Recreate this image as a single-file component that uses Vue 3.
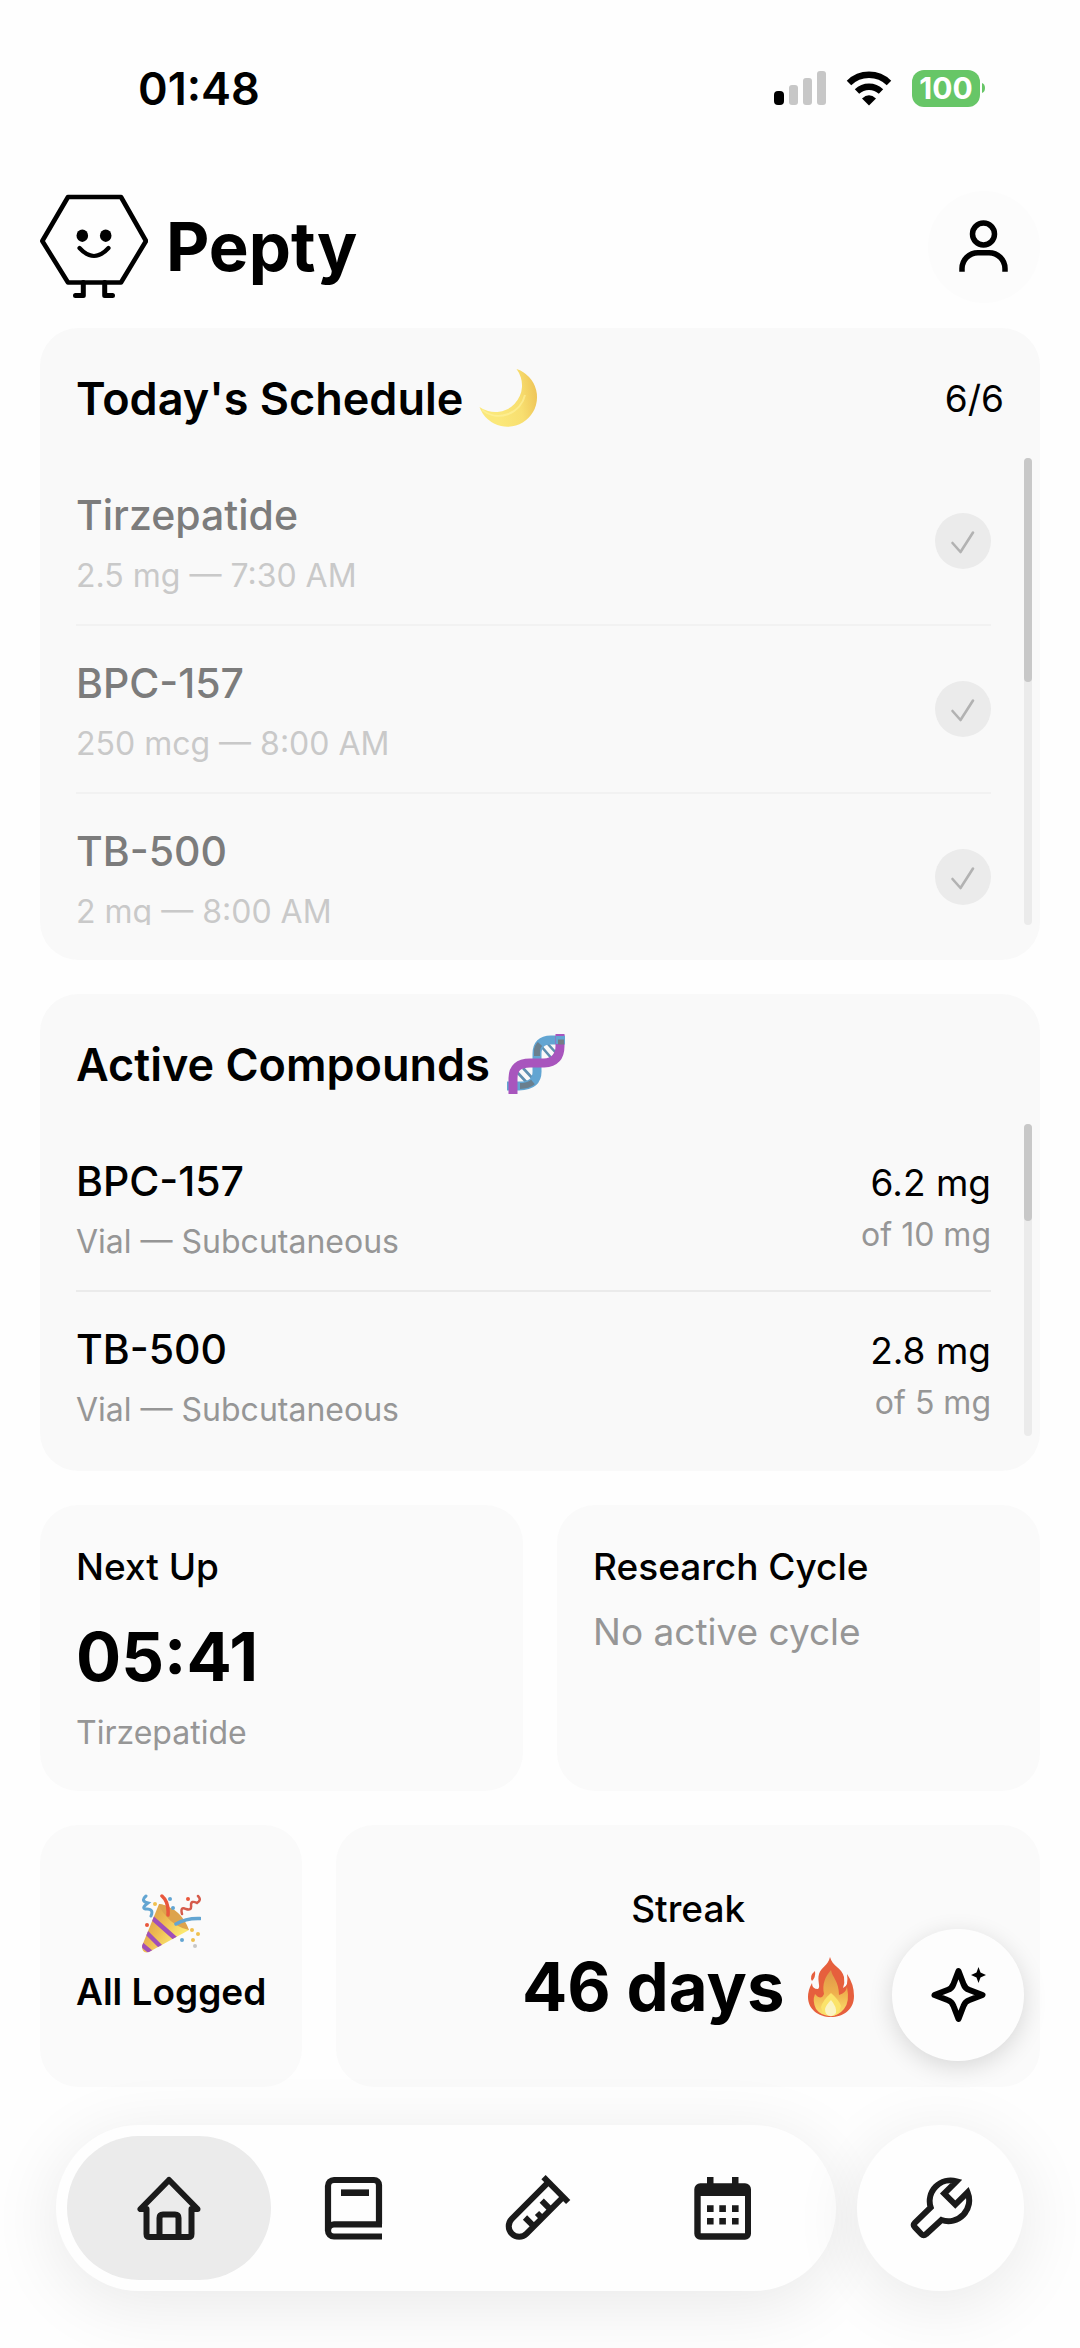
<template>
  <div class="app">
    <div class="status-bar">
      <span class="time">01:48</span>
      <div class="status-icons">
        <svg class="signal" width="54" height="34" viewBox="0 0 54 34">
          <rect x="0" y="20" width="10" height="14" rx="4" fill="#000" />
          <rect x="15" y="14" width="9" height="20" rx="3" fill="#c7c7c7" />
          <rect x="29" y="7" width="9" height="27" rx="3" fill="#c7c7c7" />
          <rect x="43" y="0" width="9" height="34" rx="3" fill="#c7c7c7" />
        </svg>
        <svg class="wifi" width="46" height="35" viewBox="0 0 46 35">
          <path d="M3 12A28.5 28.5 0 0 1 43 12" fill="none" stroke="#000" stroke-width="6.4" />
          <path d="M11 20.5A17.5 17.5 0 0 1 35 20.5" fill="none" stroke="#000" stroke-width="6.4" />
          <path d="M23 34.5L16 27.5Q23 21 30 27.5Z" fill="#000" />
        </svg>
        <span class="battery">100</span>
        <svg width="5" height="12" viewBox="0 0 5 12">
          <path d="M1 1Q4 2 4 6Q4 10 1 11Z" fill="#67c667" />
        </svg>
      </div>
    </div>

    <header class="header">
      <div class="brand">
        <svg width="108" height="108" viewBox="0 0 108 108" fill="none" stroke="#000" stroke-width="4.6" stroke-linejoin="round" stroke-linecap="round">
          <path d="M28 4H81L106 48L81 89.5H28L2.3 48Z" />
          <path d="M39.5 55Q54 71 68.5 55" stroke-width="4.2" />
          <path d="M43.3 89.5V102.5H35.5M64.7 89.5V102.5H72.5" stroke-width="5" />
          <ellipse cx="42.3" cy="42.7" rx="5.8" ry="6.2" fill="#000" stroke="none" />
          <ellipse cx="65.7" cy="42.7" rx="5.8" ry="6.2" fill="#000" stroke="none" />
        </svg>
        <h1>Pepty</h1>
      </div>
      <button class="profile" aria-label="Profile">
        <svg class="icon" viewBox="0 0 72 72" fill="none" stroke="#000" stroke-width="5.5">
          <circle cx="35.5" cy="23" r="11" />
          <path d="M14 60.7V57.5A16 16 0 0 1 30 41.7H41A16 16 0 0 1 57 57.5V60.7" />
        </svg>
      </button>
    </header>

    <main class="content">
      <section class="card list-card">
        <div class="card-head">
          <h2>Today's Schedule</h2>
          <svg class="emoji" viewBox="0 0 60 60">
            <defs>
              <linearGradient id="moon" x1="0.3" y1="0.7" x2="1" y2="0.6">
                <stop offset="0" stop-color="#fbe87a" />
                <stop offset="0.6" stop-color="#f8df70" />
                <stop offset="1" stop-color="#efc75a" />
              </linearGradient>
            </defs>
            <path d="M37.5 1A29.6 29.6 0 1 1 .5 39A26.8 26.8 0 0 0 37.5 1Z" fill="url(#moon)" />
            <path d="M3 42A27 27 0 0 0 46 27" fill="none" stroke="#fff3a0" stroke-width="2" opacity=".6" />
          </svg>
          <span class="count">{{ doneCount }}/{{ schedule.length * 2 }}</span>
        </div>
        <div class="scroll-area schedule-area">
          <ul class="rows">
            <li v-for="item in schedule" :key="item.name" class="row" :class="{ done: item.done }">
              <div>
                <div class="row-title">{{ item.name }}</div>
                <div class="row-sub">{{ item.dose }} — {{ item.time }}</div>
              </div>
              <label class="check">
                <input type="checkbox" v-model="item.done" :aria-label="item.name" />
                <svg v-if="item.done" width="56" height="56" viewBox="0 0 56 56">
                  <path d="M17.5 30L25.5 39L38 19.5" fill="none" stroke="#b2b2b2" stroke-width="2.6" stroke-linecap="round" stroke-linejoin="round" />
                </svg>
              </label>
            </li>
          </ul>
          <div class="track"><div class="thumb" :style="{ height: '48%' }"></div></div>
        </div>
      </section>

      <section class="card list-card">
        <div class="card-head">
          <h2>Active Compounds</h2>
          <svg class="emoji" viewBox="0 0 60 60" fill="none">
            <path d="M11 38L24 52M17 34L28 46M35 12L47 26M41 9L51 20" stroke="#5f8fb0" stroke-width="2.6" />
            <path d="M1 52H13Q32 52 31 36L31 20Q31 6 45 6H59" stroke="#62a5d2" stroke-width="9" />
            <path d="M7 60V44Q7 29 24 29H38Q54 28 54 12V0" stroke="#a855bd" stroke-width="9" />
            <path d="M31 22V17Q31 13 34 10M14 52Q22 52 27 48" stroke="#6a7f8e" stroke-width="6" />
            <path d="M50 6H59" stroke="#62a5d2" stroke-width="8" />
            <path d="M52 8H58" stroke="#757d85" stroke-width="5" />
          </svg>
        </div>
        <div class="scroll-area compound-area">
          <ul class="rows">
            <li v-for="item in compounds" :key="item.name" class="row">
              <div>
                <div class="row-title">{{ item.name }}</div>
                <div class="row-sub">{{ item.form }} — {{ item.route }}</div>
              </div>
              <div class="amount">
                <div class="left">{{ item.left }} mg</div>
                <div class="total">of {{ item.total }} mg</div>
              </div>
            </li>
          </ul>
          <div class="track"><div class="thumb" :style="{ height: '31%' }"></div></div>
        </div>
      </section>

      <div class="pair">
        <section class="card info">
          <h3>Next Up</h3>
          <div class="big">05:41</div>
          <p class="small">Tirzepatide</p>
        </section>
        <section class="card info">
          <h3>Research Cycle</h3>
          <p class="muted">No active cycle</p>
        </section>
      </div>

      <div class="bottom">
        <section class="card logged">
          <svg class="emoji" viewBox="0 0 60 60" fill="none" stroke-linecap="round">
            <defs>
              <linearGradient id="cone" x1="0" y1="0.3" x2="0.7" y2="0.8">
                <stop offset="0" stop-color="#d99c49" />
                <stop offset="0.5" stop-color="#eebb52" />
                <stop offset="1" stop-color="#fae66f" />
              </linearGradient>
              <clipPath id="coneClip">
                <path d="M18 10Q32 10 48 36L8 58Q1 60 1 52Z" />
              </clipPath>
            </defs>
            <path d="M18 10Q32 10 48 36L8 58Q1 60 1 52Z" fill="url(#cone)" />
            <path d="M18 10Q40 14 48 36Q34 33 25 22Q18 14 18 10Z" fill="#dda34d" />
            <g clip-path="url(#coneClip)">
              <path d="M9 22L36 46M3 36L21 54M-1 49L12 60" stroke="#a04fb8" stroke-width="4.5" />
            </g>
            <path d="M5 2Q-1 7 7 9Q-1 15 6 15Q13 15 10 22" stroke="#62a5d2" stroke-width="3" />
            <path d="M21 2Q28 8 27 21" stroke="#e9573c" stroke-width="3.5" />
            <path d="M35 30Q45 24 59 24.5" stroke="#62a5d2" stroke-width="3.5" />
            <path d="M41 20Q39 12 45 15Q51 17 50 11Q50 6 56 9Q61 6 57 2" stroke="#d55b4b" stroke-width="2.5" />
            <g fill="#62a5d2"><circle cx="29" cy="5" r="2" /><circle cx="32" cy="14" r="2" /><circle cx="41" cy="46" r="2" /></g>
            <g fill="#e9573c"><circle cx="47" cy="5" r="2" /><circle cx="6" cy="31" r="2" /></g>
            <g fill="#efc04f"><circle cx="14" cy="10" r="2" /><circle cx="51" cy="36" r="2" /><circle cx="57" cy="40" r="2" /><circle cx="52" cy="46" r="2" /></g>
            <circle cx="54" cy="52" r="2" fill="#c7c7c7" />
          </svg>
          <div class="logged-text">All Logged</div>
        </section>
        <section class="card streak">
          <h3>Streak</h3>
          <div class="days">
            <span class="big">46 days</span>
            <svg width="46" height="60" viewBox="0 0 46 60">
              <defs>
                <linearGradient id="flame" x1="0" y1="0" x2="0" y2="1">
                  <stop offset="0" stop-color="#dd9648" />
                  <stop offset="0.5" stop-color="#efb04d" />
                  <stop offset="1" stop-color="#fbe46f" />
                </linearGradient>
              </defs>
              <path d="M22 0C24 9 34 11 36 20Q37 26 35 31Q41 29 39 17Q46 27 46 39C46 53 35 60 23 60C10 60 0 52 0 40Q0 33 4 26Q4 32 10 32C13 30 9 24 11 17C13 10 20 9 22 0Z" fill="#e65f3d" />
              <path d="M7 14Q8 20 4 24Q1 19 7 14Z" fill="#e65f3d" />
              <path d="M23 13C24 20 31 24 31 38Q38 36 39 30Q42 45 36 52Q30 59 23 59Q13 59 8 52Q4 44 7 37Q13 44 16 37C14 27 17 20 23 13Z" fill="url(#flame)" />
              <path d="M23 36Q31 43 33 49Q31 59 23 59Q14 58 13 50Q15 43 23 36Z" fill="#fbe36a" />
              <path d="M23 43Q29 50 28 56Q25 60 22 59Q17 58 17 52Q18 48 23 43Z" fill="#fbf4c4" />
            </svg>
          </div>
        </section>
      </div>
    </main>

    <button class="assistant" aria-label="Assistant">
      <svg class="icon" viewBox="0 0 72 72">
        <path d="M36.5 12L41.5 25Q43 29.5 47.5 31L60.5 36L47.5 41Q43 42.5 41.5 47L36.5 60L31.5 47Q30 42.5 25.5 41L12.5 36L25.5 31Q30 29.5 31.5 25Z" fill="none" stroke="#000" stroke-width="6" stroke-linejoin="round" />
        <path d="M56.5 8L58.5 13.5L64 16L58.5 18.5L56.5 24L54.5 18.5L49 16L54.5 13.5Z" fill="#000" />
      </svg>
    </button>

    <div class="dock">
      <nav class="tabs">
        <button v-for="tab in tabs" :key="tab" class="tab" :class="{ active: tab === current }" :aria-label="tab" @click="current = tab">
          <svg v-if="tab === 'Home'" class="icon" viewBox="0 0 72 72" fill="none" stroke="#1a1a1a" stroke-width="6" stroke-linejoin="round">
            <path d="M7.5 37H13.5V62Q13.5 65 16.5 65H55.5Q58.5 65 58.5 62V37H64.5L36 8Z" />
            <path d="M26.5 65V46Q26.5 42.5 30 42.5H42Q45.5 42.5 45.5 46V65" />
          </svg>
          <svg v-else-if="tab === 'Journal'" class="icon" viewBox="0 0 72 72" fill="none" stroke="#1a1a1a" stroke-width="6.2">
            <path d="M61 52V13A5 5 0 0 0 56 8H16A6 6 0 0 0 10 14V58.5A6 6 0 0 0 16 64.5H64" />
            <path d="M10 58.5A6 6 0 0 1 16 52.3H64" />
            <path d="M23 20.7H51" stroke-width="6.6" />
          </svg>
          <svg v-else-if="tab === 'Lab'" class="icon" viewBox="0 0 72 72" fill="none" stroke="#1a1a1a" stroke-width="6">
            <path d="M41.5 5.2L66.2 30" />
            <path d="M46.4 10.2L9.8 46.8A10.4 10.4 0 0 0 24.6 61.6L61.2 25" />
            <path d="M23 45.5L31.9 54.3M35 41L40.6 46.6M39.7 28.7L48.6 37.6" />
          </svg>
          <svg v-else class="icon" viewBox="0 0 72 72" fill="#1a1a1a">
            <path d="M20 5H26.5V11.3H45V5H51.5V11.3H58A6 6 0 0 1 64 17.3V61.7A6 6 0 0 1 58 67.7H13.3A6 6 0 0 1 7.3 61.7V17.3A6 6 0 0 1 13.3 11.3H20ZM13.7 24V61.3H58V24Z" fill-rule="evenodd" />
            <path d="M20 33.3h6.6v6.6h-6.6zM32.3 33.3h6.6v6.6h-6.6zM45 33.3h6.6v6.6h-6.6zM20 46h6.6v6.6h-6.6zM32.3 46h6.6v6.6h-6.6zM45 46h6.6v6.6h-6.6z" />
          </svg>
        </button>
      </nav>
      <button class="tools" aria-label="Tools">
        <svg class="icon" viewBox="0 0 72 72" fill="none" stroke="#1a1a1a" stroke-width="6">
          <path d="M51.5 9.3L39.2 21.5L50.3 32.6L62.6 20.4A20.8 20.8 0 0 1 36.5 48L21 62.2Q18.7 64.5 16.5 62.2L9.8 55.2Q7.5 53 9.8 50.8L25.7 35.5A20.8 20.8 0 0 1 51.5 9.3Z" />
        </svg>
      </button>
    </div>
  </div>
</template>

<script setup>
import { ref, computed } from 'vue'

const tabs = ['Home', 'Journal', 'Lab', 'Calendar']
const current = ref('Home')

const schedule = ref([
  { name: 'Tirzepatide', dose: '2.5 mg', time: '7:30 AM', done: true },
  { name: 'BPC-157', dose: '250 mcg', time: '8:00 AM', done: true },
  { name: 'TB-500', dose: '2 mg', time: '8:00 AM', done: true }
])

const compounds = ref([
  { name: 'BPC-157', form: 'Vial', route: 'Subcutaneous', left: 6.2, total: 10 },
  { name: 'TB-500', form: 'Vial', route: 'Subcutaneous', left: 2.8, total: 5 }
])

// every item is taken twice a day
const doneCount = computed(() => schedule.value.filter(item => item.done).length * 2)
</script>

<style>
body {
  margin: 0;
  background: #fefefe;
}
</style>

<style scoped>
.app {
  min-height: 100vh;
  box-sizing: border-box;
  font-family: Inter, "Liberation Sans", sans-serif;
  color: #000;
}

h1, h2, h3, p, ul {
  margin: 0;
  padding: 0;
}

button {
  display: flex;
  align-items: center;
  justify-content: center;
  padding: 0;
  border: none;
  cursor: pointer;
}

.icon {
  width: 72px;
  height: 72px;
}

.emoji {
  width: 60px;
  height: 60px;
}

.status-bar {
  display: flex;
  align-items: center;
  justify-content: space-between;
  height: 176px;
  padding: 0 94px 0 138px;
}

.time {
  font-size: 45px;
  font-weight: 600;
}

.status-icons {
  display: flex;
  align-items: center;
}

.wifi {
  margin: 0 20px 0 18px;
}

.battery {
  width: 68px;
  border-radius: 12px;
  background: #67c667;
  color: #fff;
  font-size: 30px;
  line-height: 37px;
  font-weight: 700;
  text-align: center;
}

.battery + svg {
  margin-left: 1px;
}

.header {
  display: flex;
  align-items: center;
  justify-content: space-between;
  padding: 15px 40px 25px;
}

.brand {
  display: flex;
  align-items: center;
  gap: 18px;
}

h1, .big {
  font-size: 67px;
  line-height: 84px;
  font-weight: 700;
}

.profile {
  width: 112px;
  height: 112px;
  border-radius: 50%;
  background: #fcfcfc;
}

.content {
  display: flex;
  flex-direction: column;
  gap: 34px;
  padding: 0 40px;
}

.card {
  box-sizing: border-box;
  border-radius: 38px;
  background: #fafafa;
}

.list-card {
  padding: 40px 36px 35px;
  background: #f9f9f9;
}

.card-head {
  display: flex;
  align-items: center;
  gap: 16px;
  height: 60px;
  margin-bottom: 30px;
}

h2 {
  font-size: 45px;
  font-weight: 600;
}

.count {
  margin-left: auto;
  font-size: 37px;
}

.scroll-area {
  display: flex;
  gap: 33px;
  margin-right: -28px;
  overflow: hidden;
}

.schedule-area {
  height: 467px;
}

.compound-area {
  height: 312px;
}

.rows {
  flex: 1;
  list-style: none;
}

.row {
  display: flex;
  align-items: center;
  justify-content: space-between;
  padding: 29px 0 26px;
  border-bottom: 2px solid #ebebeb;
}

.row:last-child {
  border-bottom: none;
}

.row-title {
  margin-bottom: 11px;
  font-size: 41px;
  line-height: 56px;
  font-weight: 500;
}

.row-sub {
  font-size: 32px;
  line-height: 44px;
  color: #969696;
}

.done {
  border-color: #f2f2f2;
}

.done .row-title {
  color: #7c7c7c;
}

.done .row-sub {
  color: #c9c9c9;
}

.check {
  display: grid;
  width: 56px;
  height: 56px;
  margin-bottom: 4px;
  border-radius: 50%;
  background: #ebebeb;
  cursor: pointer;
}

.check input {
  appearance: none;
  width: 56px;
  height: 56px;
  margin: 0;
  grid-area: 1 / 1;
}

.check svg {
  grid-area: 1 / 1;
}

.track {
  width: 8px;
  border-radius: 4px;
  background: #ebebeb;
}

.thumb {
  border-radius: 4px;
  background: #c8c8c8;
}

.amount {
  line-height: 52px;
  text-align: right;
}

.left {
  font-size: 37px;
}

.total {
  font-size: 32px;
  color: #969696;
}

.pair {
  display: grid;
  grid-template-columns: 1fr 1fr;
  gap: 34px;
}

.info {
  min-height: 286px;
  padding: 36px 36px 34px;
}

h3 {
  font-size: 37px;
  line-height: 52px;
  font-weight: 500;
}

.info .big {
  margin: 22px 0 12px;
}

.small {
  font-size: 32px;
  line-height: 44px;
  color: #969696;
}

.muted {
  margin-top: 12px;
  font-size: 37px;
  line-height: 54px;
  color: #969696;
}

.bottom {
  display: flex;
  gap: 34px;
}

.logged, .streak {
  display: flex;
  flex-direction: column;
  align-items: center;
  justify-content: center;
  height: 262px;
}

.logged {
  padding: 0 36px;
  gap: 12px;
}

.logged-text {
  font-size: 37px;
  line-height: 52px;
  font-weight: 600;
}

.streak {
  flex: 1;
  gap: 10px;
}

.days {
  display: flex;
  align-items: center;
  gap: 24px;
}

.assistant {
  position: fixed;
  right: 56px;
  bottom: 287px;
  width: 132px;
  height: 132px;
  border-radius: 50%;
  background: #fdfdfd;
  box-shadow: 0 6px 24px rgba(0, 0, 0, 0.14);
}

.dock {
  position: fixed;
  right: 56px;
  bottom: 57px;
  left: 56px;
  display: flex;
  gap: 21px;
}

.tabs {
  display: flex;
  flex: 1;
  align-items: center;
  justify-content: space-between;
  height: 166px;
  box-sizing: border-box;
  padding: 0 11px;
  border-radius: 83px;
  background: #fefefe;
  box-shadow: 0 12px 70px rgba(0, 0, 0, 0.09);
}

.tab {
  width: 204px;
  height: 144px;
  border-radius: 72px;
  background: none;
}

.tab + .tab {
  margin-left: -20px;
}

.tab.active {
  background: #ebebeb;
}

.tools {
  width: 167px;
  height: 166px;
  border-radius: 50%;
  background: #fefefe;
  box-shadow: 0 12px 70px rgba(0, 0, 0, 0.09);
}
</style>
